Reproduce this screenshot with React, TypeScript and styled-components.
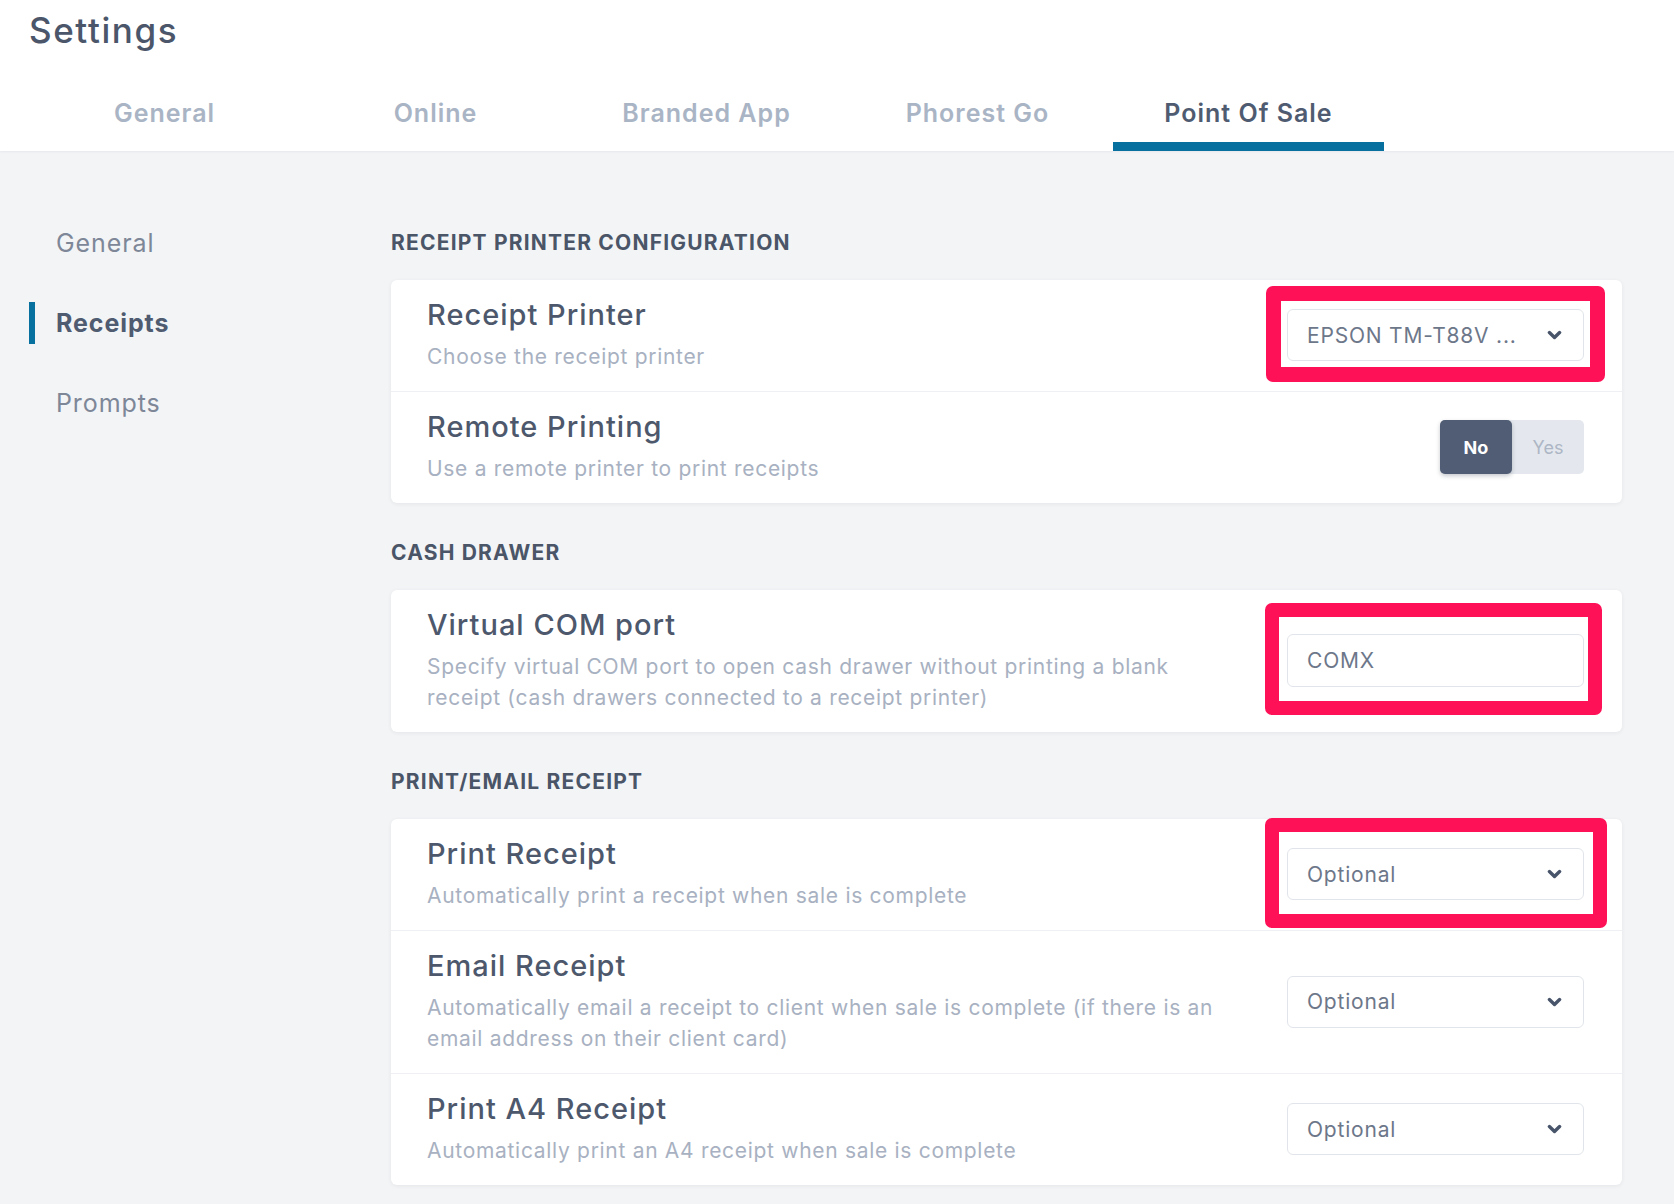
import React from "react";
import styled, { createGlobalStyle } from "styled-components";

const GlobalStyle = createGlobalStyle`
  * { box-sizing: border-box; }
  html, body { margin: 0; padding: 0; }
  body {
    background: #f3f4f6;
    font-family: Inter, "Open Sans", "Liberation Sans", sans-serif;
    color: #4d586c;
  }
`;

const Page = styled.div`
  min-height: 1204px;
  display: flex;
  flex-direction: column;
`;

const Header = styled.header`
  background: #ffffff;
  box-shadow: 0 1px 2px rgba(30, 40, 60, 0.06);
  padding: 0 0 0 29px;
  display: flex;
  flex-direction: column;
`;

const PageTitle = styled.h1`
  margin: 0;
  padding-top: 8px;
  height: 76px;
  font-size: 35px;
  line-height: 44px;
  font-weight: 500;
  letter-spacing: 1.6px;
  color: #4b566a;
`;

const TabBar = styled.nav`
  display: flex;
  height: 75px;
`;

const Tab = styled.div<{ $active?: boolean }>`
  width: 271px;
  display: flex;
  align-items: center;
  justify-content: center;
  padding-top: 8px;
  font-size: 25px;
  font-weight: 600;
  letter-spacing: 1px;
  color: ${(p) => (p.$active ? "#4f5b70" : "#a9b4c5")};
  border-bottom: 9px solid ${(p) => (p.$active ? "#07709e" : "transparent")};
`;

const Body = styled.div`
  display: flex;
  padding: 0 52px 0 29px;
`;

const Sidebar = styled.aside`
  width: 362px;
  padding-top: 71px;
  display: flex;
  flex-direction: column;
  gap: 38px;
`;

const SideItem = styled.div<{ $active?: boolean }>`
  height: 42px;
  display: flex;
  align-items: center;
  padding-left: ${(p) => (p.$active ? "21px" : "27px")};
  border-left: ${(p) => (p.$active ? "6px solid #07709e" : "none")};
  font-size: 25px;
  letter-spacing: 0.9px;
  font-weight: ${(p) => (p.$active ? 700 : 400)};
  color: ${(p) => (p.$active ? "#4f5b70" : "#7d8798")};
`;

const Content = styled.main`
  flex: 1;
  padding-top: 80px;
  display: flex;
  flex-direction: column;
`;

const SectionLabel = styled.h2`
  margin: 0 0 25px;
  font-size: 21px;
  line-height: 24px;
  font-weight: 700;
  letter-spacing: 1.2px;
  color: #4a5568;
  text-transform: uppercase;
`;

const Card = styled.section`
  background: #ffffff;
  border-radius: 6px;
  box-shadow: 0 1px 4px rgba(30, 40, 60, 0.07);
  margin-bottom: 38px;
`;

const Row = styled.div`
  display: flex;
  align-items: center;
  padding: 18px 38px 19px 36px;
  & + & {
    border-top: 1px solid #eef0f3;
  }
`;

const RowText = styled.div`
  flex: 1;
  min-width: 0;
  padding-right: 44px;
`;

const RowTitle = styled.div`
  font-size: 29px;
  line-height: 34px;
  font-weight: 500;
  letter-spacing: 1px;
  color: #4d586c;
`;

const RowHint = styled.div`
  margin-top: 9px;
  font-size: 21px;
  line-height: 31px;
  letter-spacing: 0.7px;
  color: #a8b1c1;
`;

const Control = styled.div`
  position: relative;
  width: 297px;
  flex-shrink: 0;
  display: flex;
  justify-content: flex-end;
`;

const Marker = styled.span<{ $t: number; $r: number; $b: number; $l: number; $w: number }>`
  position: absolute;
  top: ${(p) => -p.$t}px;
  right: ${(p) => -p.$r}px;
  bottom: ${(p) => -p.$b}px;
  left: ${(p) => -p.$l}px;
  border: ${(p) => p.$w}px solid #ff1157;
  border-radius: 7px;
  pointer-events: none;
`;

const Select = styled.div`
  width: 297px;
  height: 52px;
  border: 1px solid #e1e5eb;
  border-radius: 6px;
  background: #ffffff;
  display: flex;
  align-items: center;
  justify-content: space-between;
  padding: 0 21px 0 19px;
  font-size: 21px;
  letter-spacing: 0.8px;
  color: #6d778a;
`;

const TextInput = styled.div`
  width: 297px;
  height: 53px;
  border: 1px solid #e1e5eb;
  border-radius: 6px;
  background: #ffffff;
  display: flex;
  align-items: center;
  padding: 0 19px;
  font-size: 21px;
  letter-spacing: 0.8px;
  color: #6d778a;
`;

const Toggle = styled.div`
  display: flex;
  width: 144px;
  height: 54px;
  border-radius: 5px;
  background: #e4e8ee;
`;

const ToggleOption = styled.div<{ $on?: boolean }>`
  flex: 1;
  display: flex;
  align-items: center;
  justify-content: center;
  border-radius: 5px;
  font-size: 18px;
  font-weight: ${(p) => (p.$on ? 700 : 400)};
  color: ${(p) => (p.$on ? "#ffffff" : "#adb6c5")};
  background: ${(p) => (p.$on ? "#505d74" : "transparent")};
  box-shadow: ${(p) => (p.$on ? "0 2px 4px rgba(30, 40, 60, 0.25)" : "none")};
`;

const Chevron = () => (
  <svg width="15" height="10" viewBox="0 0 15 10" aria-hidden="true">
    <path d="M2.4 2.6 L7.5 7.5 L12.6 2.6" fill="none" stroke="#48546a" strokeWidth="3.4" strokeLinecap="round" strokeLinejoin="round" />
  </svg>
);

type Mark = { t: number; r: number; b: number; l: number; w: number };

const Dropdown = ({ value }: { value: string }) => (
  <Select>
    <span>{value}</span>
    <Chevron />
  </Select>
);

const Setting = ({
  title,
  hint,
  children,
  mark,
}: {
  title: string;
  hint: string;
  children: React.ReactNode;
  mark?: Mark;
}) => (
  <Row>
    <RowText>
      <RowTitle>{title}</RowTitle>
      <RowHint>{hint}</RowHint>
    </RowText>
    <Control>
      {children}
      {mark && <Marker $t={mark.t} $r={mark.r} $b={mark.b} $l={mark.l} $w={mark.w} />}
    </Control>
  </Row>
);

const tabs = ["General", "Online", "Branded App", "Phorest Go", "Point Of Sale"];

export default function App() {
  return (
    <Page>
      <GlobalStyle />
      <Header>
        <PageTitle>Settings</PageTitle>
        <TabBar>
          {tabs.map((t) => (
            <Tab key={t} $active={t === "Point Of Sale"}>
              {t}
            </Tab>
          ))}
        </TabBar>
      </Header>
      <Body>
        <Sidebar>
          <SideItem>General</SideItem>
          <SideItem $active>Receipts</SideItem>
          <SideItem>Prompts</SideItem>
        </Sidebar>
        <Content>
          <SectionLabel>Receipt Printer Configuration</SectionLabel>
          <Card>
            <Setting
              title="Receipt Printer"
              hint="Choose the receipt printer"
              mark={{ t: 23, r: 21, b: 21, l: 21, w: 15 }}
            >
              <Dropdown value="EPSON TM-T88V ..." />
            </Setting>
            <Setting title="Remote Printing" hint="Use a remote printer to print receipts">
              <Toggle>
                <ToggleOption $on>No</ToggleOption>
                <ToggleOption>Yes</ToggleOption>
              </Toggle>
            </Setting>
          </Card>

          <SectionLabel>Cash Drawer</SectionLabel>
          <Card>
            <Setting
              title="Virtual COM port"
              hint="Specify virtual COM port to open cash drawer without printing a blank receipt (cash drawers connected to a receipt printer)"
              mark={{ t: 31, r: 18, b: 28, l: 22, w: 14 }}
            >
              <TextInput>COMX</TextInput>
            </Setting>
          </Card>

          <SectionLabel>Print/Email Receipt</SectionLabel>
          <Card>
            <Setting
              title="Print Receipt"
              hint="Automatically print a receipt when sale is complete"
              mark={{ t: 30, r: 23, b: 28, l: 22, w: 14 }}
            >
              <Dropdown value="Optional" />
            </Setting>
            <Setting
              title="Email Receipt"
              hint="Automatically email a receipt to client when sale is complete (if there is an email address on their client card)"
            >
              <Dropdown value="Optional" />
            </Setting>
            <Setting title="Print A4 Receipt" hint="Automatically print an A4 receipt when sale is complete">
              <Dropdown value="Optional" />
            </Setting>
          </Card>
        </Content>
      </Body>
    </Page>
  );
}
